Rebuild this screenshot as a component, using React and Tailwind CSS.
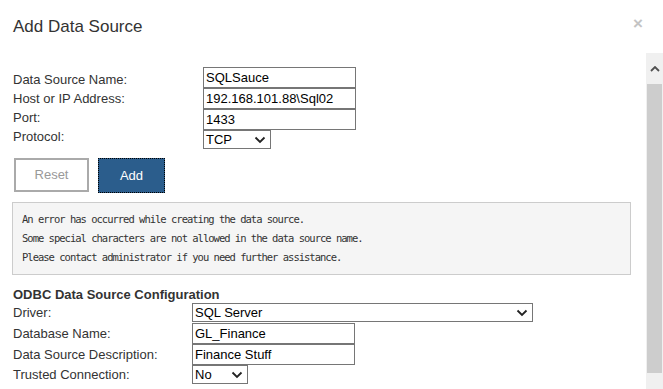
import React from 'react';

const Chevron = ({ className }) => (
    <svg viewBox="0 0 12 8" className={className} fill="none" stroke="#222" strokeWidth="1.8">
        <path d="M1.5 1.5 L6 6 L10.5 1.5" />
    </svg>
);

const TextBox = ({ value, width }) => (
    <div className={`${width} h-[21px] border border-[#767676] px-[2px] text-[13px] leading-[19px] text-black bg-white`}>
        {value}
    </div>
);

const SelectBox = ({ value, width }) => (
    <div className={`${width} h-[19px] border border-[#767676] pl-[2px] pr-[4px] flex items-center justify-between text-[13px] text-black bg-white`}>
        <span>{value}</span>
        <Chevron className="w-[12px] h-[8px]" />
    </div>
);

const App = () => {
    return (
        <div className="w-[663px] h-[389px] bg-white overflow-hidden font-['Liberation_Sans',Arial,sans-serif] text-[#333]">
            <div className="flex items-start justify-between h-[53px]">
                <h1 className="pl-[13px] pt-[17px] text-[17px] leading-[20px] text-[#333]">Add Data Source</h1>
                <span className="pr-[20px] pt-[11px] text-[17px] font-bold text-[#c4c4c4]">×</span>
            </div>

            <div className="flex h-[336px]">
                <div className="flex-1 pl-[13px] pr-[15px] pt-[14px]">
                    <div className="flex">
                        <div className="w-[190px] text-[13px] leading-[19px] pt-[3px]">
                            <div>Data Source Name:</div>
                            <div>Host or IP Address:</div>
                            <div>Port:</div>
                            <div>Protocol:</div>
                        </div>
                        <div className="flex flex-col">
                            <TextBox value="SQLSauce" width="w-[153px]" />
                            <TextBox value="192.168.101.88\Sql02" width="w-[153px]" />
                            <TextBox value="1433" width="w-[153px]" />
                            <SelectBox value="TCP" width="w-[68px]" />
                        </div>
                    </div>

                    <div className="flex gap-[9px] mt-[9px] pl-[1px]">
                        <button className="w-[75px] h-[34px] border-2 border-[#aaa] bg-white text-[13px] text-[#999]">Reset</button>
                        <button className="w-[67px] h-[35px] border border-dotted border-black bg-[#2b5d8c] text-[13px] text-white">Add</button>
                    </div>

                    <div className="mt-[9px] -ml-[1px] border border-[#ccc] bg-[#f5f5f5] px-[9px] py-[7px] font-['DejaVu_Sans_Mono',monospace] text-[10.5px] tracking-[-1px] leading-[19px] text-[#333]">
                        <div>An error has occurred while creating the data source.</div>
                        <div>Some special characters are not allowed in the data source name.</div>
                        <div>Please contact administrator if you need further assistance.</div>
                    </div>

                    <div className="mt-[12px] text-[13px] font-bold leading-[16px] text-[#333]">ODBC Data Source Configuration</div>
                    <div className="grid grid-cols-[179px_auto] text-[13px]">
                        <div className="h-[20px] leading-[20px]">Driver:</div>
                        <SelectBox value="SQL Server" width="w-[341px]" />
                        <div className="h-[20px] leading-[22px]">Database Name:</div>
                        <TextBox value="GL_Finance" width="w-[163px]" />
                        <div className="h-[21px] leading-[22px]">Data Source Description:</div>
                        <TextBox value="Finance Stuff" width="w-[163px]" />
                        <div className="h-[20px] leading-[20px]">Trusted Connection:</div>
                        <SelectBox value="No" width="w-[56px]" />
                    </div>
                </div>

                <div className="w-[17px] bg-[#f0f0f0] flex flex-col">
                    <div className="h-[31px] flex items-center justify-center">
                        <svg viewBox="0 0 10 6" className="w-[10px] h-[6px]" fill="none" stroke="#505050" strokeWidth="1.8">
                            <path d="M1 5 L5 1 L9 5" />
                        </svg>
                    </div>
                    <div className="mx-[1px] h-[289px] bg-[#cdcdcd]" />
                </div>
            </div>
        </div>
    );
};

export default App;
